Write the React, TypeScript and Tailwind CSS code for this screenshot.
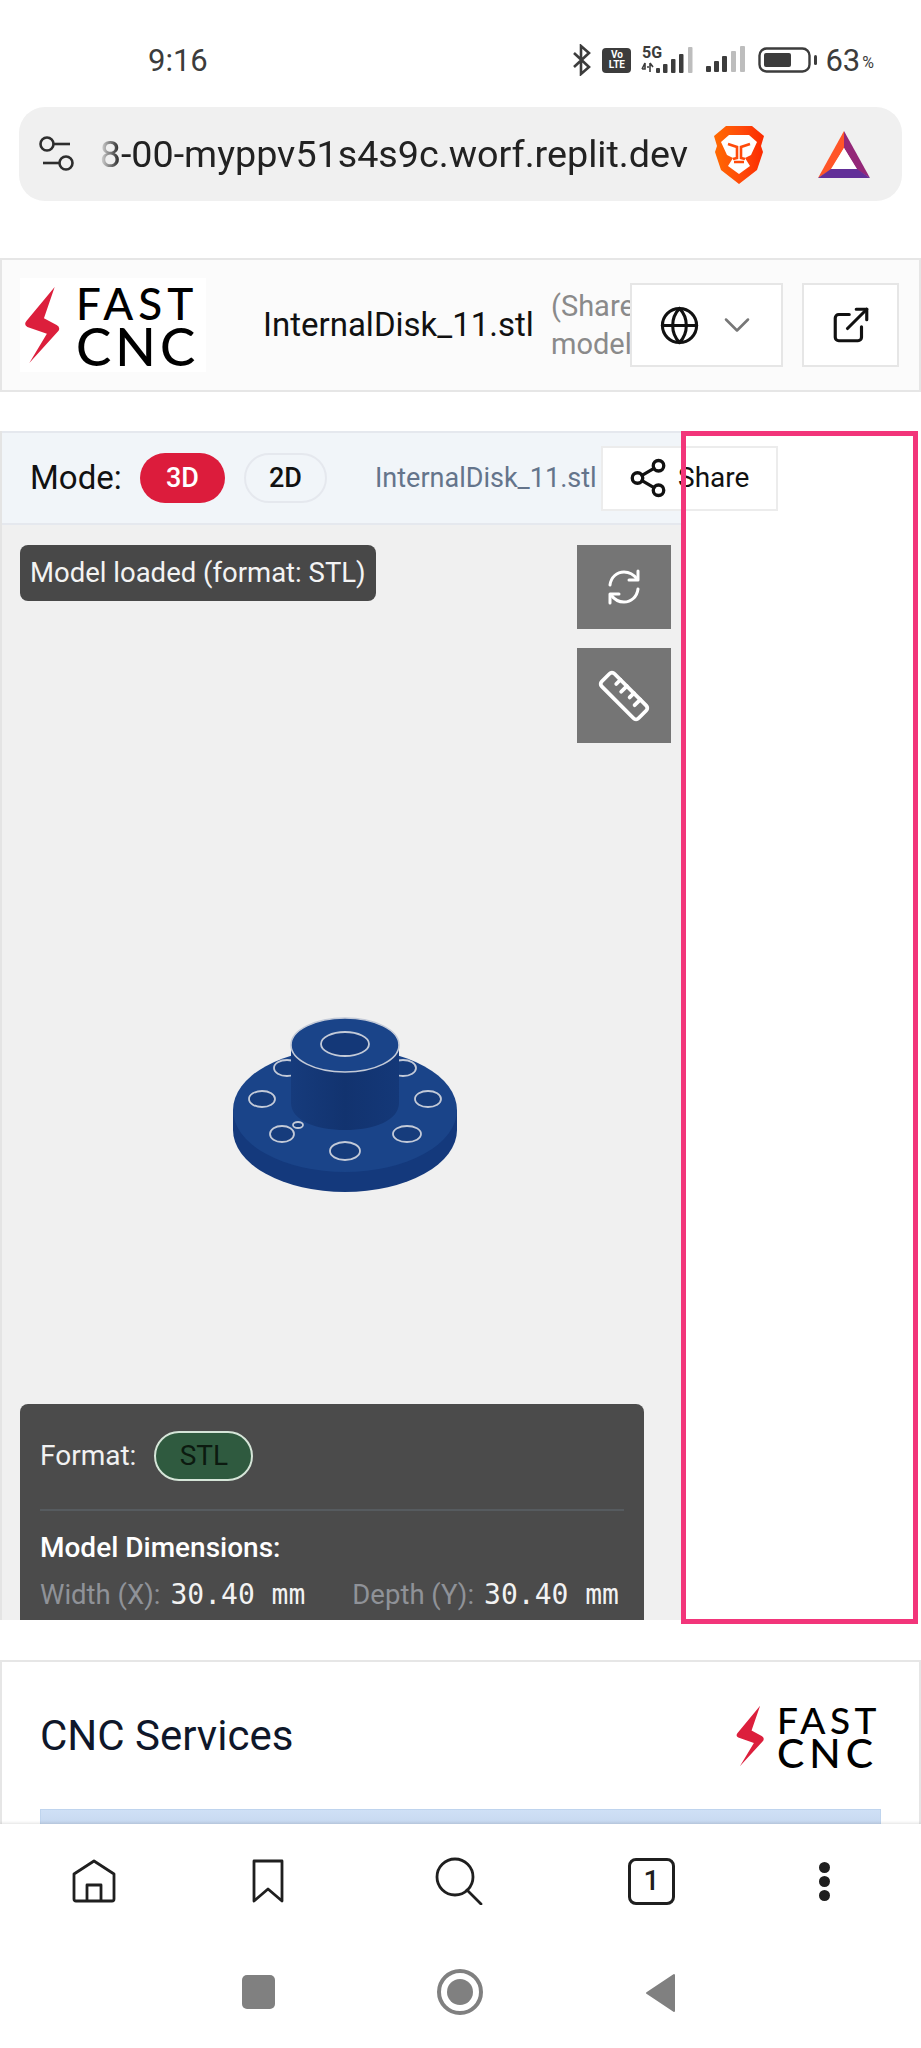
import { ChevronDown, ExternalLink, Globe, Share2 } from "lucide-react";

function Bolt({ className }: { className: string }) {
  return (
    <svg viewBox="0 0 36 78" className={className}>
      <path
        d="M31 0 L2 35 Q-1 39 3 41 L23 48 L5 78 L35 45 Q37 41 33 39 L20 32 Z"
        fill="#dc1f3c"
      />
    </svg>
  );
}

function HeaderLogo() {
  return (
    <div className="flex h-[94px] w-[186px] shrink-0 items-center bg-white pl-[4px]">
      <Bolt className="h-[76px] w-[36px] shrink-0" />
      <div className="ml-[16px] flex flex-col font-['Lato',sans-serif] text-black">
        <span className="text-[44px] leading-[42px] font-medium tracking-[5px]">FAST</span>
        <span className="text-[53px] leading-[44px] font-medium tracking-[4px]">CNC</span>
      </div>
    </div>
  );
}

function ServicesLogo() {
  return (
    <div className="flex items-center">
      <Bolt className="h-[64px] w-[28px] shrink-0" />
      <div className="ml-[13px] flex flex-col font-['Lato',sans-serif] text-black">
        <span className="text-[37px] leading-[33px] font-medium tracking-[4.5px]">FAST</span>
        <span className="text-[41px] leading-[33px] font-medium tracking-[5px]">CNC</span>
      </div>
    </div>
  );
}

function StatusIcons() {
  return (
    <div className="flex items-center text-[#3c3c3c]">
      <svg viewBox="0 0 20 32" className="h-[32px] w-[20px]">
        <path d="M2 9 L17 23 L9 30 V2 L17 9 L2 23" fill="none" stroke="#3c3c3c" strokeWidth="2.6" />
      </svg>
      <div className="ml-[10px] flex h-[25px] w-[29px] flex-col items-center justify-center rounded-[4px] bg-[#3c3c3c] font-['Roboto',sans-serif] text-[10px] leading-[10px] font-bold text-white">
        <span>Vo</span>
        <span>LTE</span>
      </div>
      <svg viewBox="0 0 58 30" className="ml-[8px] h-[30px] w-[58px]">
        <text x="3" y="13" fontSize="16" fontWeight="700" fontFamily="Roboto, sans-serif" fill="#3c3c3c">5G</text>
        <path d="M3 24 H6 V18 L3 24 M11 18 V27 M8 22 H10 M11 18 L14 22" stroke="#3c3c3c" strokeWidth="1.6" fill="none" />
        <rect x="17" y="23" width="4" height="5" rx="1" fill="#3c3c3c" />
        <rect x="24" y="19" width="4.5" height="9" rx="1" fill="#3c3c3c" />
        <rect x="32" y="14" width="4.5" height="14" rx="1" fill="#3c3c3c" />
        <rect x="40" y="9" width="4.5" height="19" rx="1" fill="#3c3c3c" />
        <rect x="49" y="2" width="4.5" height="26" rx="1" fill="#bdbdbd" />
      </svg>
      <svg viewBox="0 0 42 28" className="ml-[8px] h-[28px] w-[42px]">
        <rect x="1" y="20" width="5" height="6" rx="1" fill="#3c3c3c" />
        <rect x="9" y="15" width="5" height="11" rx="1" fill="#3c3c3c" />
        <rect x="17" y="10" width="5" height="16" rx="1" fill="#3c3c3c" />
        <rect x="26" y="5" width="5" height="21" rx="1" fill="#bdbdbd" />
        <rect x="35" y="0" width="5" height="26" rx="1" fill="#bdbdbd" />
      </svg>
      <svg viewBox="0 0 60 26" className="ml-[11px] h-[26px] w-[60px]">
        <rect x="1.5" y="1.5" width="50" height="23" rx="7" fill="none" stroke="#3c3c3c" strokeWidth="2.4" />
        <rect x="6" y="6" width="27" height="14" rx="2" fill="#3c3c3c" />
        <rect x="56" y="8" width="3" height="10" rx="1.5" fill="#3c3c3c" />
      </svg>
      <span className="ml-[7px] text-[31px] leading-none">63</span>
      <span className="ml-[2px] mt-[6px] text-[16px] leading-none">%</span>
    </div>
  );
}

function BraveIcon() {
  return (
    <svg viewBox="0 0 52 60" className="h-[60px] w-[52px]">
      <defs>
        <linearGradient id="brave" x1="0" x2="1" y1="0" y2="0">
          <stop offset="0" stopColor="#ff6a00" />
          <stop offset="0.55" stopColor="#ff4a0a" />
          <stop offset="1" stopColor="#fb2a00" />
        </linearGradient>
      </defs>
      <path
        d="M13 2 H39 L45 7 L51 12 L48 22 L50 28 L44 46 L26 60 L8 46 L2 28 L4 22 L1 12 L7 7 Z"
        fill="url(#brave)"
      />
      <path
        d="M8 18 L16 11 H36 L44 18 L38 31 L32 34 L37 42 L26 50 L15 42 L20 34 L14 31 Z"
        fill="#fff"
      />
      <path
        d="M15 20 L24 23 V34 L20 35 M37 20 L28 23 V34 L32 35 M21 38 H31"
        fill="none"
        stroke="#ff4a0a"
        strokeWidth="2.6"
      />
    </svg>
  );
}

function BatIcon() {
  return (
    <svg viewBox="0 0 52 47" className="h-[47px] w-[52px]">
      <path d="M26 0 L26 17 L13 39 L0 47 Z" fill="#ff5528" />
      <path d="M26 0 L52 47 L39 39 L26 17 Z" fill="#932778" />
      <path d="M0 47 L13 38 H39 L52 47 Z" fill="#622f98" />
      <path d="M26 17 L39 38 H13 Z" fill="#fff" />
    </svg>
  );
}

function SliderIcon() {
  return (
    <svg viewBox="0 0 38 36" className="h-[36px] w-[38px] shrink-0" fill="none" stroke="#2e2e2e" strokeWidth="2.6">
      <circle cx="9" cy="8" r="6.5" />
      <path d="M16 8 H32" />
      <circle cx="28" cy="27" r="6.5" />
      <path d="M5 27 H21" />
    </svg>
  );
}

function FlangeModel() {
  const holes = [
    [287, 1068, 13, 8],
    [403, 1068, 13, 8],
    [262, 1099, 13, 8],
    [428, 1099, 13, 8],
    [282, 1134, 12, 8],
    [407, 1134, 14, 8],
    [345, 1151, 15, 9],
    [298, 1125, 5, 3],
  ];
  return (
    <svg viewBox="220 970 260 230" className="ml-[218px] mt-[227px] h-[230px] w-[260px] shrink-0">
      <defs>
        <linearGradient id="boss" x1="0" x2="1" y1="0" y2="0">
          <stop offset="0" stopColor="#163b7c" />
          <stop offset="0.5" stopColor="#12336f" />
          <stop offset="1" stopColor="#143878" />
        </linearGradient>
      </defs>
      <path d="M233 1110 V1130 A112 62 0 0 0 457 1130 V1110 Z" fill="#14397c" />
      <ellipse cx="345" cy="1110" rx="112" ry="62" fill="#1a4489" />
      {holes.map(([cx, cy, rx, ry]) => (
        <ellipse key={cx} cx={cx} cy={cy} rx={rx} ry={ry} fill="#163c7c" stroke="#c3cad8" strokeWidth="1.8" />
      ))}
      <path d="M291 1045 V1103 C291 1120 315 1130 345 1130 C375 1130 399 1120 399 1103 V1045 Z" fill="url(#boss)" />
      <ellipse cx="345" cy="1045" rx="54" ry="27" fill="#1a4489" stroke="#c3cad8" strokeWidth="1.6" />
      <ellipse cx="345" cy="1044" rx="24" ry="12" fill="#143878" stroke="#c3cad8" strokeWidth="1.8" />
    </svg>
  );
}

function ModelViewer() {
  return (
    <div className="relative h-[1193px] w-full">
      <div className="flex h-[1189px] w-[682px] flex-col border-l-2 border-[#e4e4e4]">
        <div className="flex h-[94px] shrink-0 items-center border-t-2 border-b-2 border-[#e5e8ee] bg-[#f1f5f9] pl-[28px]">
          <span className="w-[90px] shrink-0 text-[33px] whitespace-nowrap text-[#111]">Mode:</span>
          <button className="ml-[20px] h-[50px] w-[85px] shrink-0 rounded-full bg-[#dc1c3c] text-[27px] font-medium text-white">3D</button>
          <button className="ml-[19px] h-[50px] w-[83px] shrink-0 rounded-full border-2 border-[#e5e8ee] text-[27px] font-medium text-[#111]">2D</button>
          <span className="ml-[48px] w-[226px] shrink-0 overflow-hidden text-[27px] whitespace-nowrap text-[#64748b]">InternalDisk_11.stl</span>
          <button className="flex h-[65px] w-[177px] shrink-0 items-center border-2 border-[#ececec] bg-white pl-[24px] text-[28px] text-[#111]">
            <Share2 className="h-[42px] w-[42px] shrink-0" strokeWidth={1.9} />
            <span className="ml-[9px]">Share</span>
          </button>
        </div>
        <div className="flex min-h-0 flex-1 flex-col bg-[#f0f0f0]">
          <div className="flex shrink-0 items-start justify-between pt-[20px] pr-[11px] pl-[18px]">
            <div className="flex h-[56px] items-center rounded-[8px] bg-[#484848] px-[10px] text-[27.5px] text-[#f3f3f3]">
              Model loaded (format: STL)
            </div>
            <div className="flex flex-col gap-[19px]">
              <button className="flex h-[84px] w-[94px] items-center justify-center bg-[#757575]">
                <svg viewBox="0 0 36 36" className="h-[36px] w-[36px]" fill="none" stroke="#fff" strokeWidth="3" strokeLinecap="round" strokeLinejoin="round">
                  <path d="M4 16 C5 8 11 3 18 3 C24 3 28 6 31 10" />
                  <path d="M32 2 V11 H23" />
                  <path d="M32 20 C31 28 25 33 18 33 C12 33 8 30 5 26" />
                  <path d="M4 34 V25 H13" />
                </svg>
              </button>
              <button className="flex h-[95px] w-[94px] items-center justify-center bg-[#757575]">
                <svg viewBox="-30 -30 60 60" className="h-[60px] w-[60px]" fill="none" stroke="#fff" strokeWidth="3.8" strokeLinecap="round" strokeLinejoin="round">
                  <g transform="rotate(45)">
                    <rect x="-26" y="-9" width="52" height="18" rx="3.5" />
                    <path d="M-14 -9 V-3 M-5 -9 V-1 M5 -9 V-3 M14 -9 V-1" />
                  </g>
                </svg>
              </button>
            </div>
          </div>
          <FlangeModel />
          <div className="mt-auto ml-[18px] h-[216px] w-[624px] shrink-0 overflow-hidden rounded-t-[8px] bg-[#4b4b4b] px-[20px] pt-[27px]">
            <div className="flex items-center">
              <span className="text-[28px] text-[#f1f1f1]">Format:</span>
              <span className="ml-[18px] flex h-[50px] w-[99px] items-center justify-center rounded-full border-2 border-[#d5e5d8] bg-[#2f5a3f] text-[28px] text-[#0c1a10]">STL</span>
            </div>
            <div className="mt-[28px] border-t-2 border-[#565b5f]" />
            <div className="mt-[21px] text-[28px] leading-[32px] font-medium text-white">Model Dimensions:</div>
            <div className="mt-[10px] flex items-center text-[27.5px] whitespace-nowrap text-[#8f9298]">
              <span>Width (X):</span>
              <span className="ml-[10px] font-['DejaVu_Sans_Mono',monospace] text-[28px] text-[#f2f2f2]">30.40 mm</span>
              <span className="ml-[47px]">Depth (Y):</span>
              <span className="ml-[10px] font-['DejaVu_Sans_Mono',monospace] text-[28px] text-[#f2f2f2]">30.40 mm</span>
            </div>
          </div>
        </div>
      </div>
      {/* highlight drawn over the screenshot */}
      <div className="pointer-events-none absolute top-0 left-[681px] h-[1193px] w-[237px] border-[5px] border-[#f2357a]" />
    </div>
  );
}

export default function App() {
  return (
    <div className="flex h-[2048px] w-[921px] flex-col overflow-hidden bg-white font-['Roboto',sans-serif]">
      <div className="flex h-[107px] shrink-0 items-center justify-between pt-[13px] pr-[47px] pl-[148px]">
        <span className="text-[31px] leading-none text-[#3c3c3c]">9:16</span>
        <StatusIcons />
      </div>

      <div className="mx-[19px] flex h-[94px] shrink-0 items-center rounded-[26px] bg-[#f0f0f0] pl-[19px]">
        <SliderIcon />
        <div className="ml-[22px] flex w-[590px] shrink-0 justify-end overflow-hidden text-[37.7px] whitespace-nowrap text-[#222] [mask-image:linear-gradient(to_right,transparent,black_22px)]">
          <span className="shrink-0">08-00-myppv51s4s9c.worf.replit.dev</span>
        </div>
        <div className="ml-[25px] shrink-0"><BraveIcon /></div>
        <div className="ml-[53px] shrink-0"><BatIcon /></div>
      </div>

      <div className="mt-[57px] flex h-[134px] shrink-0 items-center border-2 border-[#e6e6e6] bg-[#fbfbfb] pl-[18px]">
        <HeaderLogo />
        <span className="ml-[57px] w-[270px] shrink-0 text-[33px] whitespace-nowrap text-[#111]">InternalDisk_11.stl</span>
        <span className="ml-[18px] w-[79px] shrink-0 overflow-hidden text-[29px] leading-[38px] text-[#8a8a8a]">
          (Shared model)
        </span>
        <button className="flex h-[84px] w-[153px] shrink-0 items-center border-2 border-[#e6e6e6] bg-white pl-[27px]">
          <Globe className="h-[41px] w-[41px] shrink-0 text-[#111]" strokeWidth={1.8} />
          <ChevronDown className="ml-[15px] h-[44px] w-[44px] shrink-0 text-[#777]" strokeWidth={1.4} />
        </button>
        <button className="ml-[19px] flex h-[84px] w-[97px] shrink-0 items-center justify-center border-2 border-[#e6e6e6] bg-white">
          <ExternalLink className="h-[42px] w-[42px] text-[#111]" strokeWidth={1.8} />
        </button>
      </div>

      <div className="mt-[39px] shrink-0">
        <ModelViewer />
      </div>

      <div className="mt-[36px] flex h-[164px] shrink-0 flex-col overflow-hidden border-x-2 border-t-2 border-[#e6e6e6] bg-white px-[38px]">
        <div className="flex h-[147px] shrink-0 items-center justify-between">
          <h2 className="text-[42px] text-[#0f172a]">CNC Services</h2>
          <ServicesLogo />
        </div>
        <div className="h-[40px] shrink-0 border border-[#bfd4ee] bg-gradient-to-b from-[#cfe0f6] to-[#b9cce6]" />
      </div>

      <div className="flex h-[126px] shrink-0 items-center bg-white pb-[12px] pl-[72px] shadow-[0_-1px_3px_rgba(0,0,0,0.12)]">
        <svg viewBox="0 0 44 44" className="h-[44px] w-[44px] shrink-0" fill="none" stroke="#1f1f1f" strokeWidth="2.8" strokeLinejoin="round">
          <path d="M22 2 L42 15 V40 Q42 42 40 42 H4 Q2 42 2 40 V15 Z" />
          <path d="M15 42 V26 H29 V42" />
        </svg>
        <svg viewBox="0 0 32 44" className="ml-[136px] h-[44px] w-[32px] shrink-0" fill="none" stroke="#1f1f1f" strokeWidth="2.8" strokeLinejoin="round">
          <path d="M2 2 H30 V42 L16 30 L2 42 Z" />
        </svg>
        <svg viewBox="0 0 48 48" className="ml-[151px] h-[48px] w-[48px] shrink-0" fill="none" stroke="#1f1f1f" strokeWidth="2.8" strokeLinecap="round">
          <circle cx="20" cy="20" r="18" />
          <path d="M32 33 L46 47" />
        </svg>
        <div className="ml-[145px] flex h-[47px] w-[47px] shrink-0 items-center justify-center rounded-[8px] border-[3px] border-[#1f1f1f] text-[28px] font-medium text-[#1f1f1f]">
          1
        </div>
        <div className="ml-[144px] flex shrink-0 flex-col gap-[3px]">
          <span className="h-[11px] w-[11px] rounded-full bg-[#1f1f1f]" />
          <span className="h-[11px] w-[11px] rounded-full bg-[#1f1f1f]" />
          <span className="h-[11px] w-[11px] rounded-full bg-[#1f1f1f]" />
        </div>
      </div>

      <div className="flex flex-1 items-start justify-center gap-[162px] bg-white pt-[19px] pr-[5px]">
        <div className="mt-[6px] h-[34px] w-[33px] rounded-[5px] bg-[#808080]" />
        <div className="flex h-[46px] w-[46px] items-center justify-center rounded-full border-[4px] border-[#808080] bg-white">
          <div className="h-[26px] w-[26px] rounded-full bg-[#808080]" />
        </div>
        <svg viewBox="0 0 30 40" className="mt-[4px] h-[40px] w-[30px]">
          <path d="M29 2 V38 L2 20 Z" fill="#808080" stroke="#808080" strokeLinejoin="round" strokeWidth="2" />
        </svg>
      </div>
    </div>
  );
}
